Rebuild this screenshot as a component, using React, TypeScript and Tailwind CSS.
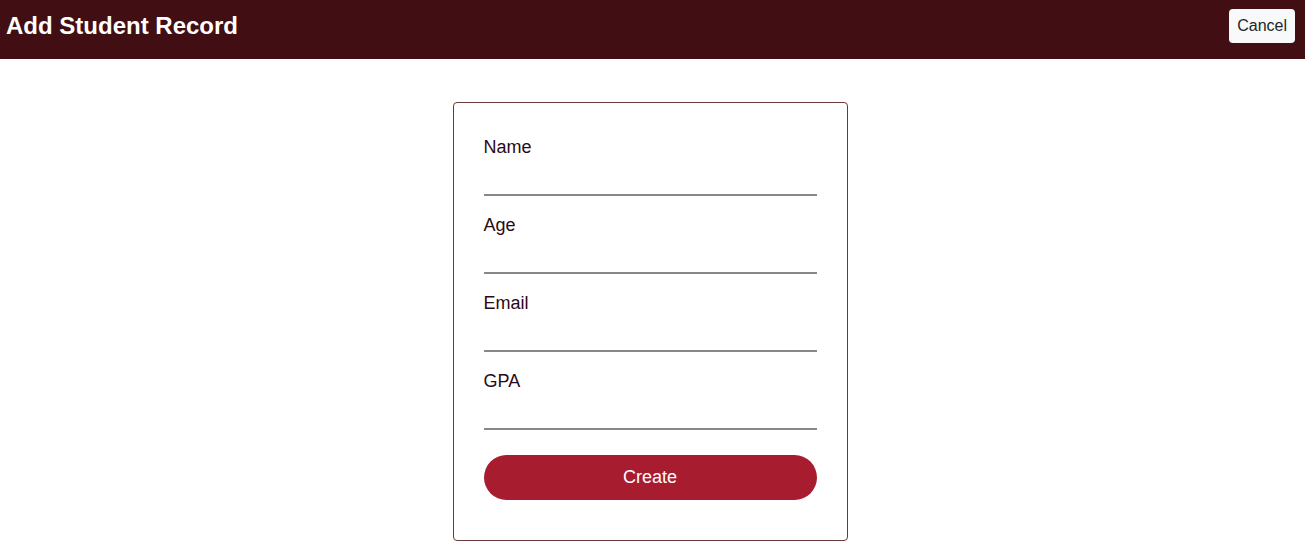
const fields = ['Name', 'Age', 'Email', 'GPA'];

export default function App() {
  return (
    <div className="min-h-screen bg-white font-['Liberation_Sans',Arial,sans-serif]">
      <header className="flex h-[59px] items-center justify-between bg-[#400e13] pb-[7px] pl-[6px] pr-[10px]">
        <h1 className="text-[24px] font-bold text-white">Add Student Record</h1>
        <button className="h-[34px] rounded-[4px] bg-[#f8f9fa] px-[8px] text-[16px] text-[#212529]">
          Cancel
        </button>
      </header>
      <main className="flex justify-center pr-[5px] pt-[43px]">
        <form className="w-[395px] rounded-[4px] border border-[#6b3a3a] px-[30px] pb-[40px] pt-[32px]">
          <div className="flex flex-col gap-[17px]">
            {fields.map((f) => (
              <label key={f} className="flex flex-col">
                <span className="text-[18px] leading-[24px] text-[#2a0a14]">{f}</span>
                <input
                  type="text"
                  className="h-[37px] border-b-2 border-[#888888] bg-transparent outline-none"
                />
              </label>
            ))}
          </div>
          <button
            type="button"
            className="mt-[25px] h-[45px] w-full rounded-full bg-[#a81c30] text-[18px] text-white"
          >
            Create
          </button>
        </form>
      </main>
    </div>
  );
}
